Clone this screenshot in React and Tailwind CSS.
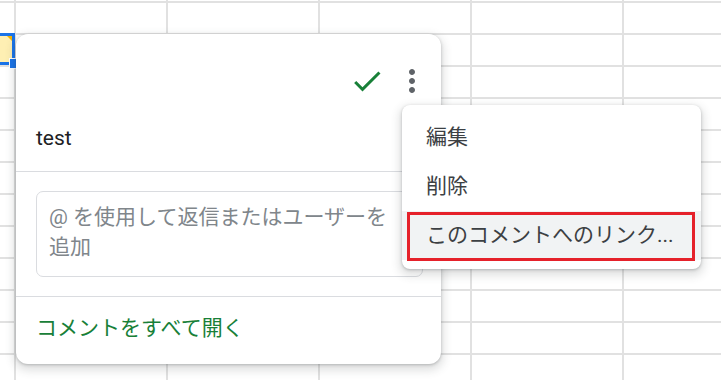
const ROWS = 13;
const COLS = 6;

const CheckIcon = () => (
    <svg viewBox="0 0 24 24" className="h-9 w-9 fill-[#188038]">
        <path d="M9 16.17L4.83 12l-1.42 1.41L9 19 21 7l-1.41-1.41z" />
    </svg>
);

const MoreIcon = () => (
    <svg viewBox="0 0 24 24" className="h-9 w-9 fill-[#5f6368]">
        <path d="M12 8c1.1 0 2-.9 2-2s-.9-2-2-2-2 .9-2 2 .9 2 2 2zm0 2c-1.1 0-2 .9-2 2s.9 2 2 2 2-.9 2-2-.9-2-2-2zm0 6c-1.1 0-2 .9-2 2s.9 2 2 2 2-.9 2-2-.9-2-2-2z" />
    </svg>
);

const SheetGrid = () => (
    <div className="grid grid-cols-[16px_repeat(5,152px)] grid-rows-[3px_repeat(12,32px)]">
        {Array.from({ length: ROWS * COLS }).map((_, i) => (
            <div key={i} className="border-r-2 border-b-2 border-[#e1e1e1] bg-white" />
        ))}
    </div>
);

const CommentCard = () => (
    <div className="absolute left-[16px] top-[34px] w-[425px] h-[330px] flex flex-col rounded-[12px] bg-white shadow-[0_1px_3px_rgba(60,64,67,0.3),0_4px_9px_3px_rgba(60,64,67,0.15)]">
        {/* Header */}
        <div className="flex justify-end items-center gap-[9px] pt-[29px] pr-[11px]">
            <CheckIcon />
            <MoreIcon />
        </div>

        <p className="mt-[24px] px-[20px] text-[21px] leading-[30px] text-[#202124]">test</p>

        <div className="mt-[18px] h-px bg-[#dadce0]" />

        {/* Reply box */}
        <div className="mt-[19px] ml-[20px] mr-[18px] h-[86px] rounded-[7px] border border-[#dadce0] pt-[10px] px-[12px] text-[21px] leading-[30px] text-[#80868b]">
            @ を使用して返信またはユーザーを
            <br />
            追加
        </div>

        <div className="mt-[19px] h-px bg-[#dadce0]" />

        <p className="mt-[16px] px-[20px] text-[21px] leading-[30px] text-[#188038]">
            コメントをすべて開く
        </p>
    </div>
);

const ContextMenu = () => {
    const items = ["編集", "削除", "このコメントへのリンク..."];

    return (
        <div className="absolute left-[402px] top-[105px] w-[299px] pt-[8px] pb-[9px] rounded-[8px] bg-white shadow-[0_1px_3px_rgba(60,64,67,0.3),0_4px_9px_3px_rgba(60,64,67,0.15)]">
            {items.map((label, i) => (
                <div
                    key={label}
                    className={`relative flex items-center h-[49px] pl-[24px] text-[21px] text-[#3c4043] ${
                        i === 2 ? "bg-[#f1f3f4]" : ""
                    }`}
                >
                    {label}
                    {i === 2 && (
                        <span className="absolute left-[5px] right-[6px] top-[1px] bottom-[-1px] border-[3px] border-[#e5212a]" />
                    )}
                </div>
            ))}
        </div>
    );
};

export default function App() {
    return (
        <div className="relative w-[721px] h-[380px] overflow-hidden bg-white font-['Roboto','Noto_Sans_CJK_JP',sans-serif]">
            <SheetGrid />

            {/* Selected cell */}
            <div className="absolute left-[-3px] top-[33px] w-[18px] h-[32px] border-[3px] border-[#1a73e8] bg-[#feefb3]">
                <span className="absolute right-0 top-0 w-0 h-0 border-l-[5px] border-l-transparent border-t-[5px] border-t-[#f6b400]" />
            </div>
            <div className="absolute left-[9px] top-[58px] w-[10px] h-[11px] border border-white bg-[#1a73e8]" />

            <CommentCard />
            <ContextMenu />
        </div>
    );
}
